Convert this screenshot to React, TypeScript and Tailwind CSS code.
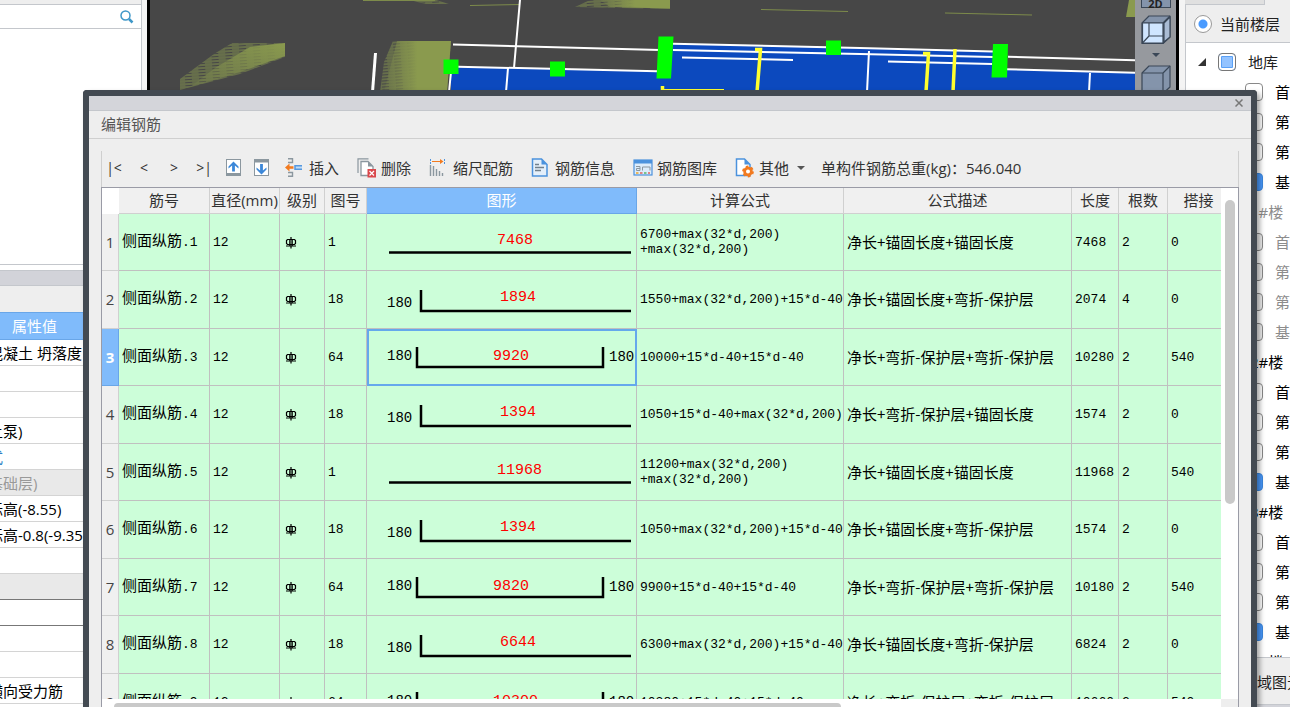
import React, { useState } from 'react';

type ShapeKind = 'straight' | 'hook' | 'double';

interface RebarRow {
  name: string;
  shapeNo: string;
  kind: ShapeKind;
  size: string;
  formula: string[];
  description: string;
  length: string;
  count: string;
  lap: string;
}

const ROWS: RebarRow[] = [
  { name: '侧面纵筋.1', shapeNo: '1', kind: 'straight', size: '7468', formula: ['6700+max(32*d,200)', '+max(32*d,200)'], description: '净长+锚固长度+锚固长度', length: '7468', count: '2', lap: '0' },
  { name: '侧面纵筋.2', shapeNo: '18', kind: 'hook', size: '1894', formula: ['1550+max(32*d,200)+15*d-40'], description: '净长+锚固长度+弯折-保护层', length: '2074', count: '4', lap: '0' },
  { name: '侧面纵筋.3', shapeNo: '64', kind: 'double', size: '9920', formula: ['10000+15*d-40+15*d-40'], description: '净长+弯折-保护层+弯折-保护层', length: '10280', count: '2', lap: '540' },
  { name: '侧面纵筋.4', shapeNo: '18', kind: 'hook', size: '1394', formula: ['1050+15*d-40+max(32*d,200)'], description: '净长+弯折-保护层+锚固长度', length: '1574', count: '2', lap: '0' },
  { name: '侧面纵筋.5', shapeNo: '1', kind: 'straight', size: '11968', formula: ['11200+max(32*d,200)', '+max(32*d,200)'], description: '净长+锚固长度+锚固长度', length: '11968', count: '2', lap: '540' },
  { name: '侧面纵筋.6', shapeNo: '18', kind: 'hook', size: '1394', formula: ['1050+max(32*d,200)+15*d-40'], description: '净长+锚固长度+弯折-保护层', length: '1574', count: '2', lap: '0' },
  { name: '侧面纵筋.7', shapeNo: '64', kind: 'double', size: '9820', formula: ['9900+15*d-40+15*d-40'], description: '净长+弯折-保护层+弯折-保护层', length: '10180', count: '2', lap: '540' },
  { name: '侧面纵筋.8', shapeNo: '18', kind: 'hook', size: '6644', formula: ['6300+max(32*d,200)+15*d-40'], description: '净长+锚固长度+弯折-保护层', length: '6824', count: '2', lap: '0' },
  { name: '侧面纵筋.9', shapeNo: '64', kind: 'double', size: '10300', formula: ['10380+15*d-40+15*d-40'], description: '净长+弯折-保护层+弯折-保护层', length: '10660', count: '2', lap: '540' },
];

const HEADERS = ['筋号', '直径(mm)', '级别', '图号', '图形', '计算公式', '公式描述', '长度', '根数', '搭接'];

const PROPERTIES = [
  { value: '混凝土 坍落度', tone: '' },
  { value: '', tone: '' },
  { value: '', tone: '' },
  { value: '土泵)', tone: '' },
  { value: '式', tone: 'link' },
  { value: '基础层)', tone: 'muted' },
  { value: '标高(-8.55)', tone: '' },
  { value: '标高-0.8(-9.35)', tone: '' },
  { value: '', tone: '' },
  { value: '', tone: 'group' },
  { value: '', tone: 'editing' },
  { value: '', tone: '' },
  { value: '', tone: '' },
  { value: '横向受力筋', tone: '' },
];

interface FloorItem {
  label: string;
  group?: boolean;
  checked?: boolean;
  disabled?: boolean;
}

const FLOORS: FloorItem[] = [
  { label: '首层' },
  { label: '第-1层' },
  { label: '第-2层' },
  { label: '基础层', checked: true },
  { label: '1#楼', group: true, disabled: true },
  { label: '首层', disabled: true },
  { label: '第-1层', disabled: true },
  { label: '第-2层', disabled: true },
  { label: '基础层', disabled: true },
  { label: '2#楼', group: true },
  { label: '首层' },
  { label: '第-1层' },
  { label: '第-2层' },
  { label: '基础层', checked: true },
  { label: '3#楼', group: true },
  { label: '首层' },
  { label: '第-1层' },
  { label: '第-2层' },
  { label: '基础层', checked: true },
  { label: '4#楼', group: true },
];

const RebarShape: React.FC<{ kind: ShapeKind; size: string }> = ({ kind, size }) => (
  <svg viewBox="0 0 269 56" className="block h-14 w-full font-['Liberation_Mono',monospace]" preserveAspectRatio="xMinYMid meet">
    {kind === 'straight' && (
      <>
        <path d="M22 38.5H264" stroke="#000" strokeWidth="2.5" />
        <text x="130" y="30" fontSize="15" fill="#f00">{size}</text>
      </>
    )}
    {kind === 'hook' && (
      <>
        <path d="M54 18V39H264" fill="none" stroke="#000" strokeWidth="2.5" />
        <text x="20" y="35" fontSize="14">180</text>
        <text x="133" y="29" fontSize="15" fill="#f00">{size}</text>
      </>
    )}
    {kind === 'double' && (
      <>
        <path d="M50 18V38H236V18" fill="none" stroke="#000" strokeWidth="2.5" />
        <text x="20" y="31" fontSize="14">180</text>
        <text x="126" y="31" fontSize="15" fill="#f00">{size}</text>
        <text x="242" y="32" fontSize="14">180</text>
      </>
    )}
  </svg>
);

const GradeSymbol = () => (
  <svg viewBox="0 0 12 13" className="ml-0.5 block h-[13px] w-3" fill="none" stroke="#000" role="img" aria-label="HRB400">
    <path d="M2.5 3.5H9.5L10.5 4.5V7.5L9.5 8.5H2.5L1.500 7.5V4.5Z" strokeWidth="1.2" />
    <path d="M4.5 3.500V10M7.500 3.500V10" strokeWidth=".8" />
    <path d="M6 1V12.500M1 10H11" strokeWidth="1.2" />
  </svg>
);

const icons = {
  up: (
    <>
      <rect x="1.5" y="1.5" width="14" height="16" fill="#fff" stroke="#8b979f" />
      <path d="M1 15H16V18H1Z" fill="#8b979f" />
      <path d="M8.500 3.500L13.500 8.500V10.500L9.900 7.500V13.500H7.100V7.500L3.500 10.500V8.500Z" fill="#3b87d8" />
    </>
  ),
  down: (
    <>
      <rect x="1.500" y="1.500" width="14" height="16" fill="#fff" stroke="#8b979f" />
      <path d="M1 1H16V4.500H1Z" fill="#8b979f" />
      <path d="M8.500 16.500L13.500 11.500V9.500L9.900 12.500V6H7.100V12.500L3.500 9.500V11.500Z" fill="#3b87d8" />
    </>
  ),
  insert: (
    <>
      <path d="M3 .8H7.500V4.500H3M3 14.500H7.500V18.200H3" fill="none" stroke="#8b979f" strokeWidth="1.400" />
      <path d="M0 9.500L4.500 5.500V8.300H8.500V10.700H4.500V13.500Z" fill="#f27a1f" />
      <path d="M10 7.500H17V11.500H10Z" fill="#c2dcf5" />
      <path d="M9.500 7.800H17M9.500 11.200H17M10 7V12" stroke="#5598df" strokeWidth="1.500" />
    </>
  ),
  remove: (
    <>
      <path d="M1 15V.8H11.500" fill="none" stroke="#8b979f" strokeWidth="1.200" />
      <path d="M4 3.500H11L16 8.500V17.500H4Z" fill="#fff" stroke="#8b979f" strokeWidth="1.300" />
      <path d="M11 3.500V8.500H16Z" fill="#8b979f" />
      <rect x="10.500" y="11" width="8.500" height="8.500" fill="#d9484c" />
      <path d="M12.500 13L17 17.500M17 13L12.500 17.500" stroke="#fff" strokeWidth="1.200" />
    </>
  ),
  scale: (
    <>
      <path d="M1.500 1V6M15.500 1V6" stroke="#4b92dd" strokeDasharray="2 1" />
      <path d="M3 2.900H11V1L14.500 3.500L11 6V4.100H3Z" fill="#f27a1f" />
      <path d="M1.500 7V18M4.500 8V18M7.500 11V18M10.500 13V18M13.500 15V18" stroke="#8b979f" strokeWidth="1.400" />
    </>
  ),
  info: (
    <>
      <path d="M1.500 1H10.500L16 6.500V18H1.500Z" fill="#e4effa" stroke="#4b92dd" strokeWidth="1.500" />
      <path d="M10.500 1V6.500H16Z" fill="#4b92dd" />
      <path d="M4 6.500H8M4 9.500H13M4 12.500H10" stroke="#71808c" strokeWidth="1.300" />
    </>
  ),
  library: (
    <>
      <rect x="1" y="2" width="18" height="15" fill="#dcecfb" stroke="#4b92dd" strokeWidth="1.200" />
      <path d="M1 2H19V5.500H1Z" fill="#4b92dd" />
      <path d="M3 8.500H7V12.500H3.500V10.500H7M9.500 12.500V9H17V12.500" fill="none" stroke="#8b979f" />
      <path d="M3 15H5.500" stroke="#f5a623" strokeWidth="1.500" />
      <path d="M7 15H9.500M15 15H17" stroke="#e0605f" strokeWidth="1.500" />
      <path d="M11 15H13.500" stroke="#5ab56a" strokeWidth="1.500" />
    </>
  ),
  other: (
    <>
      <path d="M1.500 1H9.500L15 6.500V17.500H1.500Z" fill="#fff" stroke="#4b92dd" strokeWidth="1.500" />
      <path d="M9.500 1V6.500H15Z" fill="#4b92dd" />
      <circle cx="13" cy="13.500" r="3.400" fill="#fff" stroke="#f27a1f" strokeWidth="2.800" />
      <circle cx="13" cy="13.500" r="5" fill="none" stroke="#f27a1f" strokeWidth="1.800" strokeDasharray="2.600 2.600" />
    </>
  ),
};

const ToolButton: React.FC<{ icon: keyof typeof icons; label: string; iconOnly?: boolean; menu?: boolean }> = ({
  icon,
  label,
  iconOnly,
  menu
}) => (
  <button type="button" aria-label={label} className="flex items-center gap-1 whitespace-nowrap">
    <svg viewBox="0 0 20 20" className="size-5 shrink-0">{icons[icon]}</svg>
    {!iconOnly && <span>{label}</span>}
    {menu && (
      <svg viewBox="0 0 8 4" className="ml-1 h-1 w-2"><path d="M0 0H8L4 4Z" fill="#555" /></svg>
    )}
  </button>
);

const ModelView = () => (
  <svg viewBox="150 0 985 96" preserveAspectRatio="xMinYMin slice" className="block h-24 w-full">
    <defs>
      <pattern id="hatch" width="14" height="3" patternUnits="userSpaceOnUse" patternTransform="rotate(-4)">
        <path d="M0 1H14" stroke="#8a9a4e" strokeWidth="1.300" opacity=".75" />
        <path d="M4 2.500H11" stroke="#8a9a4e" opacity=".4" />
      </pattern>
      <linearGradient id="fadeLeft">
        <stop offset="0" stopColor="#8a9a4e" stopOpacity=".1" />
        <stop offset=".5" stopColor="#8a9a4e" />
      </linearGradient>
      <linearGradient id="fadeDiagonal" x1="0" y1="1" x2="1" y2="0">
        <stop offset="0" stopColor="#8a9a4e" stopOpacity=".1" />
        <stop offset="1" stopColor="#8a9a4e" />
      </linearGradient>
    </defs>

    {/* terrain patches */}
    <path d="M393 41H451L447 92H380L384 62Z" fill="url(#hatch)" />
    <path d="M397 41H451L447 92H384Z" fill="url(#fadeLeft)" />
    <path d="M232 43H285V57L240 74L180 90V79L214 54Z" fill="url(#hatch)" />
    <path d="M250 47L285 43V56L240 72L190 87L215 68Z" fill="url(#fadeDiagonal)" />
    <path d="M590 0H670V9L575 7Z" fill="url(#hatch)" />
    <path d="M600 0H670V8.500L610 7Z" fill="url(#fadeLeft)" />
    <path d="M1129 0H1135V17H1126Z" fill="#8a9a4e" />
    <path d="M540 0M410 0H436L449 4L425 4Z" fill="url(#hatch)" />
    <path d="M520 4.500L470 5.500M363 .5H435M761 9.500L848 11.500M945 13L1032 15" stroke="#7d8b4b" fill="none" />

    {/* slab */}
    <path d="M451 67L657 71L673 44L860 48L993 52L1008 69L1135 73V96H451Z" fill="#0c49be" />

    <g stroke="#fff" strokeWidth="2" fill="none">
      <path d="M453 44.500L660 50M458 66.700L657 71.300M673 43.700L860 48L993 51.500M673 50L860 54L993 57" />
      <path d="M1008 56.700L1135 60.300M1006 69.300L1135 72.700M682 57.500L793 60M888 61.500L992 64" />
      <path d="M520 0L514 68M508 68L506 92M451 72L449 92M869 51L867 92M1090 73L1089 92" />
      <path d="M375.500 53L372.500 92" strokeWidth="3" />
    </g>
    <g stroke="#ffff2e" strokeWidth="3.500" fill="none">
      <path d="M755 49.500H760.500L757 92M923 53.500H928.500L926 92M955 49L953 92M662.500 86V92" />
      <path d="M664 89.500H724" strokeWidth="1" />
    </g>
    <g fill="#0f0">
      <path d="M443.500 59.500H458.500V74H443.500ZM550 61.500H565V76.500H550ZM826 40.500H841V55H826Z" />
      <path d="M658.500 36.500H673.500L671 78.500H656.500ZM993 44H1008L1007 77.500H991.500Z" />
    </g>
  </svg>
);

const Cube: React.FC<{ active?: boolean }> = ({ active }) => (
  <svg viewBox="0 0 30 30" className="block size-[30px] shrink-0" stroke="#3a4757" strokeWidth="1.200" strokeLinejoin="round">
    <path d="M1 8L8 1H29V22L22 28.500H1Z" fill="#8494ab" />
    <path d="M1 8H22L29 1M22 8V28.500" fill="none" />
    {active && (
      <>
        <path d="M1.500 8H22V28H1.500Z" fill="#cfe5ff" />
        <path d="M23 8L29 2V22L23 27Z" fill="#a9bbd4" />
        <path d="M8 8V21H22M8 21L1 28.500" fill="none" />
      </>
    )}
  </svg>
);

const PropertyPanel = () => (
  <aside className="flex w-[142px] shrink-0 flex-col border-r border-[#c4c7cc] bg-white">
    <div className="h-[5px] shrink-0 border-b border-[#c4c7cc] bg-[#eee]" />
    <label className="flex h-6 shrink-0 items-center border-b border-[#c4c7cc] pr-[7px]">
      <input type="text" aria-label="搜索构件" className="w-full min-w-0 outline-none" />
      <svg viewBox="0 0 14 14" className="h-3.5 w-3.5 shrink-0" fill="none" stroke="#3e97c8">
        <circle cx="5.500" cy="5.500" r="4.500" strokeWidth="1.500" />
        <path d="M9 9L12.500 12.500" strokeWidth="2.500" />
      </svg>
    </label>
    <div className="h-[236px] shrink-0 border-b border-[#c4c7cc]" />
    <div className="mt-[5px] h-4 shrink-0 border-y border-[#c4c7cc] bg-[#d2d3d9]" />
    <div className="h-[26px] shrink-0 bg-[#eee]" />
    <div className="h-7 shrink-0 border-y border-[#69a6e8] bg-[#80bbfb] pl-3 leading-[26px] text-white">属性值</div>
    {PROPERTIES.map((p, i) => (
      <div
        key={i}
        className={`h-[26px] shrink-0 overflow-hidden border-b whitespace-nowrap leading-[26px] ${
          p.tone === 'muted' ? 'border-[#d4d4d4] bg-[#e9e9e9] text-[#999]'
            : p.tone === 'link' ? 'border-[#d4d4d4] text-[#2f7fc4]'
            : p.tone === 'group' ? 'border-[#777] bg-[#e9e9e9]'
            : p.tone === 'editing' ? 'border-[#777]'
            : 'border-[#d4d4d4] text-black'
        }`}
      >
        <span className="-ml-3">{p.value}</span>
      </div>
    ))}
  </aside>
);

const FloorPanel: React.FC = () => {
  const [floors, setFloors] = useState<FloorItem[]>(FLOORS);

  const toggle = (index: number) => {
    setFloors(floors.map((f, i) => (i === index ? { ...f, checked: !f.checked } : f)));
  };

  return (
    <aside className="flex w-[111px] shrink-0 flex-col border-l-[6px] border-[#f4f4f4] bg-white">
      <div className="h-[5px] shrink-0 bg-[#eee]">
        <div className="h-[5px] w-20 border-r border-b border-[#c4c7cc] bg-[#e0e0e0]" />
      </div>
      <label className="flex h-[38px] shrink-0 items-center gap-2 border-b border-l border-[#c4c7cc] bg-[#eee] pl-2 whitespace-nowrap">
        <input
          type="radio"
          defaultChecked
          className="size-[18px] shrink-0 appearance-none rounded-full border border-[#999] bg-white bg-[radial-gradient(circle,#4a9bff_4px,transparent_5px)]"
        />
        当前楼层
      </label>
      <div className="min-h-0 flex-1 overflow-hidden border-l border-[#c4c7cc] pt-1 whitespace-nowrap">
        <label className="flex h-[30px] items-center pl-3">
          <svg viewBox="0 0 8 8" className="mr-3 size-2 shrink-0"><path d="M8 0V8H0Z" fill="#333" /></svg>
          <input
            type="checkbox"
            defaultChecked
            className="mr-3 size-[18px] shrink-0 appearance-none rounded border border-[#777] bg-[#93c3ff] shadow-[inset_0_0_0_2px_#fff,inset_0_0_0_3px_#5aa0f5]"
          />
          地库
        </label>
        {floors.map((f, i) =>
          f.group ? (
            <div key={i} className={`h-[30px] pl-16 leading-[30px] ${f.disabled ? 'text-[#8c8c8c]' : 'text-black'}`}>{f.label}</div>
          ) : (
            <label key={i} className={`flex h-[30px] items-center pl-[59px] ${f.disabled ? 'text-[#8c8c8c]' : 'text-black'}`}>
              <input
                type="checkbox"
                checked={!!f.checked}
                disabled={f.disabled}
                onChange={() => toggle(i)}
                className="mr-3 size-[18px] shrink-0 appearance-none rounded-sm border border-[#888] bg-white checked:border-[#3c88df] checked:bg-[#4a9bff] disabled:bg-[#eee]"
              />
              {f.label}
            </label>
          )
        )}
      </div>
      <div className="h-12 shrink-0 border-y border-l border-[#c4c7cc] bg-[#eee] pl-14 leading-[48px] whitespace-nowrap">区域图元</div>
      <div className="h-0.5 shrink-0 bg-[#d2d3d9]" />
    </aside>
  );
};

const RebarTable: React.FC<{ selected: number; onSelect: (i: number) => void }> = ({ selected, onSelect }) => {
  const cell = "border-r border-b border-[#c0c0c0] bg-[#ccfed9] p-0 pl-[3px] text-left font-normal";

  return (
    <table className="w-full table-fixed border-separate border-spacing-0 font-['Liberation_Mono','Noto_Sans_CJK_SC',monospace] text-[13px] leading-[15px] whitespace-nowrap text-black">
      <colgroup>
        <col className="w-[17px]" />
        <col className="w-[91px]" />
        <col className="w-[70px]" />
        <col className="w-[45px]" />
        <col className="w-[42px]" />
        <col className="w-[270px]" />
        <col className="w-[207px]" />
        <col className="w-[228px]" />
        <col className="w-[47px]" />
        <col className="w-[49px]" />
        <col />
      </colgroup>
      <thead className="font-['Open_Sans','Noto_Sans_CJK_SC',sans-serif] text-[15px] text-[#333]">
        <tr className="h-[26px]">
          <td className="bg-white p-0" />
          {HEADERS.map((h, i) => (
            <th
              key={h}
              scope="col"
              className={`border-r border-b p-0 font-normal last:border-r-0 ${
                i === 4 ? 'border-[#69a6e8] bg-[#80bbfb] text-white' : 'border-[#d0d0d0] bg-[#f0f0f0] last:pl-2'
              }`}
            >
              {h}
            </th>
          ))}
        </tr>
      </thead>
      <tbody>
        {ROWS.map((row, i) => (
          <tr key={row.name} onClick={() => onSelect(i)} className="odd:h-[57px] even:h-[58px]">
            <th
              scope="row"
              className={`border-r border-b p-0 text-center font-['Open_Sans',sans-serif] text-[15px] ${
                i === selected ? 'border-[#69a6e8] bg-[#80bbfb] font-bold text-white' : 'border-[#d0d0d0] bg-[#f0f0f0] font-normal text-[#444]'
              }`}
            >
              {i + 1}
            </th>
            <td className={cell}><span className="text-[15px]">{row.name.slice(0, 4)}</span>{row.name.slice(4)}</td>
            <td className={cell}>12</td>
            <td className={cell}><GradeSymbol /></td>
            <td className={cell}>{row.shapeNo}</td>
            <td className={`border-r border-b border-[#c0c0c0] bg-[#ccfed9] p-0 ${i === selected ? 'outline-2 -outline-offset-2 outline-[#65a8ec]' : ''}`}>
              <RebarShape kind={row.kind} size={row.size} />
            </td>
            <td className={cell}>
              {row.formula.map(line => <div key={line}>{line}</div>)}
            </td>
            <td className="border-r border-b border-[#c0c0c0] bg-[#ccfed9] p-0 pb-0.5 pl-[3px] font-['Noto_Sans_CJK_SC',sans-serif] text-[15px]">{row.description}</td>
            <td className={cell}>{row.length}</td>
            <td className={cell}>{row.count}</td>
            <td className="border-b border-[#c0c0c0] bg-[#ccfed9] p-0 pl-[3px]">{row.lap}</td>
          </tr>
        ))}
      </tbody>
    </table>
  );
};

const RebarDialog = () => {
  const [selected, setSelected] = useState(2);
  const step = (to: number) => setSelected(Math.max(0, Math.min(ROWS.length - 1, to)));
  const navButton = 'w-6 text-center text-sm';

  return (
    <section
      role="dialog"
      aria-label="编辑钢筋"
      className="absolute top-[90px] right-[33px] bottom-0 left-[83px] flex flex-col rounded-t border-x-[6px] border-t-[6px] border-[#434a52] bg-[#eee] shadow-[3px_3px_5px_rgba(0,0,0,0.35)]"
    >
      <div className="flex h-[15px] shrink-0 items-center justify-end border-b border-[#c4c7cc] bg-[#d4d5da] pr-2">
        <button type="button" aria-label="关闭">
          <svg viewBox="0 0 8 8" className="size-2"><path d="M.5 .5L7.500 7.500M7.500 .5L.5 7.500" stroke="#777" strokeWidth="1.500" /></svg>
        </button>
      </div>
      <h1 className="h-7 shrink-0 border-b border-[#cfcfcf] pl-3 leading-[27px] text-[#555]">编辑钢筋</h1>

      <div className="mt-3 mr-3 ml-3 flex min-h-0 flex-1 flex-col">
        <div className="flex h-9 shrink-0 items-center border-x border-[#cfcfcf] pb-0.5 text-[#333]">
          <div className="mr-[9px] flex gap-1.5">
            <button type="button" aria-label="第一行" className={navButton} onClick={() => step(0)}>|&lt;</button>
            <button type="button" aria-label="上一行" className={navButton} onClick={() => step(selected - 1)}>&lt;</button>
            <button type="button" aria-label="下一行" className={navButton} onClick={() => step(selected + 1)}>&gt;</button>
            <button type="button" aria-label="最后一行" className={navButton} onClick={() => step(ROWS.length - 1)}>&gt;|</button>
          </div>
          <div className="mr-3 flex gap-2">
            <ToolButton icon="up" label="上移" iconOnly />
            <ToolButton icon="down" label="下移" iconOnly />
          </div>
          <div className="flex gap-[18px]">
            <ToolButton icon="insert" label="插入" />
            <ToolButton icon="remove" label="删除" />
            <ToolButton icon="scale" label="缩尺配筋" />
            <ToolButton icon="info" label="钢筋信息" />
            <ToolButton icon="library" label="钢筋图库" />
            <ToolButton icon="other" label="其他" menu />
          </div>
          <p className="ml-4 whitespace-nowrap">单构件钢筋总重(kg)：546.040</p>
        </div>

        <div className="flex min-h-0 flex-1 border-x border-t border-[#9a9ba6] bg-white">
          <div className="flex min-w-0 flex-1 flex-col">
            <div className="min-h-0 flex-1 overflow-hidden">
              <RebarTable selected={selected} onSelect={setSelected} />
            </div>
            <div className="h-2 shrink-0 overflow-hidden bg-white pt-1">
              <div className="ml-3 h-2 w-[65%] rounded-full bg-[#c9c9c9]" />
            </div>
          </div>
          <div className="flex w-[17px] shrink-0 flex-col items-center pt-3">
            <div className="h-3/5 w-2.5 rounded-full bg-[#c9c9c9]" />
            <div className="mt-auto h-2 w-full bg-[#eee]" />
          </div>
        </div>
      </div>
    </section>
  );
};

const App = () => (
  <div className="relative flex h-screen overflow-hidden bg-[#f4f4f4] font-['Open_Sans','Noto_Sans_CJK_SC',sans-serif] text-[15px] leading-5 text-[#222]">
    <PropertyPanel />
    <main className="ml-[5px] flex min-w-0 flex-1 border-x-[3px] border-black bg-[#474747]">
      <div className="min-w-0 flex-1">
        <ModelView />
      </div>
      <nav className="flex w-[41px] shrink-0 flex-col items-center bg-[#96999e]">
        <button type="button" className="h-2 w-[30px] border-x border-b border-[#3a4757] bg-[#8494ab] text-[11px] leading-[1px] font-bold">2D</button>
        <button type="button" aria-label="三维视图" className="mt-[7px]"><Cube active /></button>
        <svg viewBox="0 0 8 4" className="my-2 h-1 w-2 shrink-0"><path d="M0 0H8L4 4Z" fill="#3a4757" /></svg>
        <button type="button" aria-label="显示模式"><Cube /></button>
      </nav>
    </main>
    <FloorPanel />
    <RebarDialog />
  </div>
);

export default App;
